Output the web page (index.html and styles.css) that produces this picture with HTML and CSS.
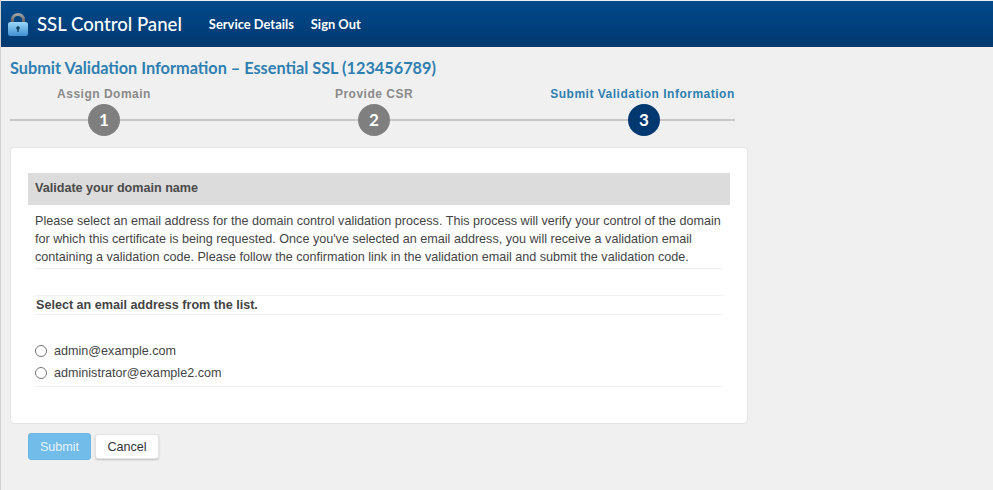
FILE: index.html
```html
<!DOCTYPE html>
<html lang="en">
<head>
<meta charset="utf-8">
<title>SSL Control Panel</title>
<link rel="stylesheet" href="styles.css">
</head>
<body>
<header class="topbar">
  <svg class="lock" viewBox="0 0 20 23" width="20" height="23" aria-hidden="true">
    <defs>
      <linearGradient id="lockbody" x1="0" y1="0" x2="0" y2="1"><stop offset="0" stop-color="#9ad6f7"/><stop offset="1" stop-color="#3f8fd2"/></linearGradient>
      <linearGradient id="shackle" x1="0" y1="0" x2="0" y2="1"><stop offset="0" stop-color="#a0a0a0"/><stop offset="1" stop-color="#555"/></linearGradient>
    </defs>
    <path d="M4.5 10V6.5a5.5 5 0 0 1 11 0V10" fill="none" stroke="url(#shackle)" stroke-width="3"/>
    <rect x="0" y="9" width="20" height="14" rx="2.5" fill="url(#lockbody)"/>
    <circle cx="10" cy="15" r="1.8" fill="#123c63"/>
    <rect x="9.3" y="15" width="1.4" height="4" fill="#123c63"/>
  </svg>
  <span class="brand">SSL Control Panel</span>
  <nav class="nav"><a href="#">Service Details</a><a href="#">Sign Out</a></nav>
</header>
<main class="page">
  <h1 class="title">Submit Validation Information – Essential SSL (123456789)</h1>
  <ol class="steps">
    <li class="step"><span class="step-label">Assign Domain</span><span class="step-num">1</span></li>
    <li class="step"><span class="step-label">Provide CSR</span><span class="step-num">2</span></li>
    <li class="step active"><span class="step-label">Submit Validation Information</span><span class="step-num">3</span></li>
  </ol>
  <section class="card">
    <h2 class="card-head">Validate your domain name</h2>
    <div class="card-body">
      <p class="intro">Please select an email address for the domain control validation process. This process will verify your control of the domain for which this certificate is being requested. Once you've selected an email address, you will receive a validation email containing a validation code. Please follow the confirmation link in the validation email and submit the validation code.</p>
      <h3 class="list-head">Select an email address from the list.</h3>
      <div class="options">
        <label class="option"><input type="radio" name="email"><span>admin@example.com</span></label>
        <label class="option"><input type="radio" name="email"><span>administrator@example2.com</span></label>
      </div>
    </div>
  </section>
  <div class="actions">
    <button class="btn btn-primary" type="button">Submit</button>
    <button class="btn btn-default" type="button">Cancel</button>
  </div>
</main>
</body>
</html>
```
FILE: styles.css
```css
* { box-sizing: border-box; }
html, body { margin: 0; height: 100%; }
body {
  background: #f0f0f0;
  font-family: "Liberation Sans", Arial, sans-serif;
  font-size: 12.6px;
  color: #444;
  border-left: 1px solid #d0d0d0;
  overflow: hidden;
}
.topbar {
  height: 47px;
  display: flex;
  align-items: center;
  padding: 0 0 0 7px;
  border-top: 1px solid #e8eef4;
  background: linear-gradient(#014a8c, #01386f);
  color: #fff;
  font-family: Lato, sans-serif;
}
.lock { flex: none; margin-right: 9px; }
.brand { font-size: 18.6px; font-weight: 500; }
.nav { display: flex; gap: 17px; margin-left: 27px; }
.nav a { color: #fff; text-decoration: none; font-size: 12.9px; font-weight: 700; }
.page { padding: 0 9px; }
.title {
  margin: 11px 0 0;
  font: 700 16.3px/20px Lato, sans-serif;
  color: #2f7fb0;
}
.steps {
  position: relative;
  list-style: none;
  margin: 9px 0 0;
  padding: 0;
  display: flex;
  gap: 82px;
  width: 725px;
  height: 55px;
}
.steps::before {
  content: "";
  position: absolute;
  left: 0;
  right: 0;
  top: 32px;
  height: 2px;
  background: #c8c8c8;
}
.step {
  position: relative;
  flex: none;
  width: 188px;
  display: flex;
  flex-direction: column;
  align-items: center;
  color: #8a8a8a;
}
.step-label {
  font-weight: 700;
  font-size: 12px;
  line-height: 14px;
  letter-spacing: 0.5px;
  white-space: nowrap;
}
.step-num {
  width: 32px;
  height: 32px;
  margin-top: 3px;
  border-radius: 50%;
  background: #7f7f7f;
  color: #fff;
  font: 700 17px/32px Lato, sans-serif;
  text-align: center;
}
.active { color: #2f7fb0; }
.active .step-label { padding-right: 3px; }
.active .step-num { background: #01386f; }
.card {
  width: 738px;
  height: 277px;
  margin-top: 5px;
  padding: 25px 17px 0 17px;
  background: #fff;
  border: 1px solid #e4e4e4;
  border-radius: 4px;
}
.card-head {
  margin: 0;
  height: 32px;
  padding-left: 7px;
  background: #dcdcdc;
  font-size: 12.6px;
  font-weight: 700;
  line-height: 31px;
  color: #4a4a4a;
}
.card-body { padding: 7px 7px 0; }
.intro {
  margin: 0;
  padding-bottom: 2px;
  line-height: 18px;
  border-bottom: 1px solid #f0f0f0;
}
.list-head {
  margin: 26px 0 0;
  padding: 0 0 0 1px;
  height: 20px;
  border-top: 1px solid #f0f0f0;
  border-bottom: 1px solid #f0f0f0;
  font-size: 12.6px;
  font-weight: 700;
  line-height: 18px;
}
.options {
  padding: 25px 0 2px;
  border-bottom: 1px solid #f0f0f0;
}
.option {
  display: flex;
  align-items: center;
  height: 22px;
}
.option input { margin: 0 7px 0 0; width: 12px; height: 12px; flex: none; }
.actions { display: flex; gap: 4px; margin-top: 9px; padding-left: 18px; }
.btn {
  height: 27px;
  border-radius: 3px;
  font: 12.6px "Liberation Sans", Arial, sans-serif;
  padding: 0;
}
.btn-primary { width: 63px; background: #72bcea; border: 1px solid #6db6e4; color: #e6f3fb; }
.btn-default { width: 64px; height: 25px; margin-top: 1px; background: #fff; border: 1px solid #e4e4e4; color: #333; box-shadow: 0 1px 2px rgba(0,0,0,.2); }
```
